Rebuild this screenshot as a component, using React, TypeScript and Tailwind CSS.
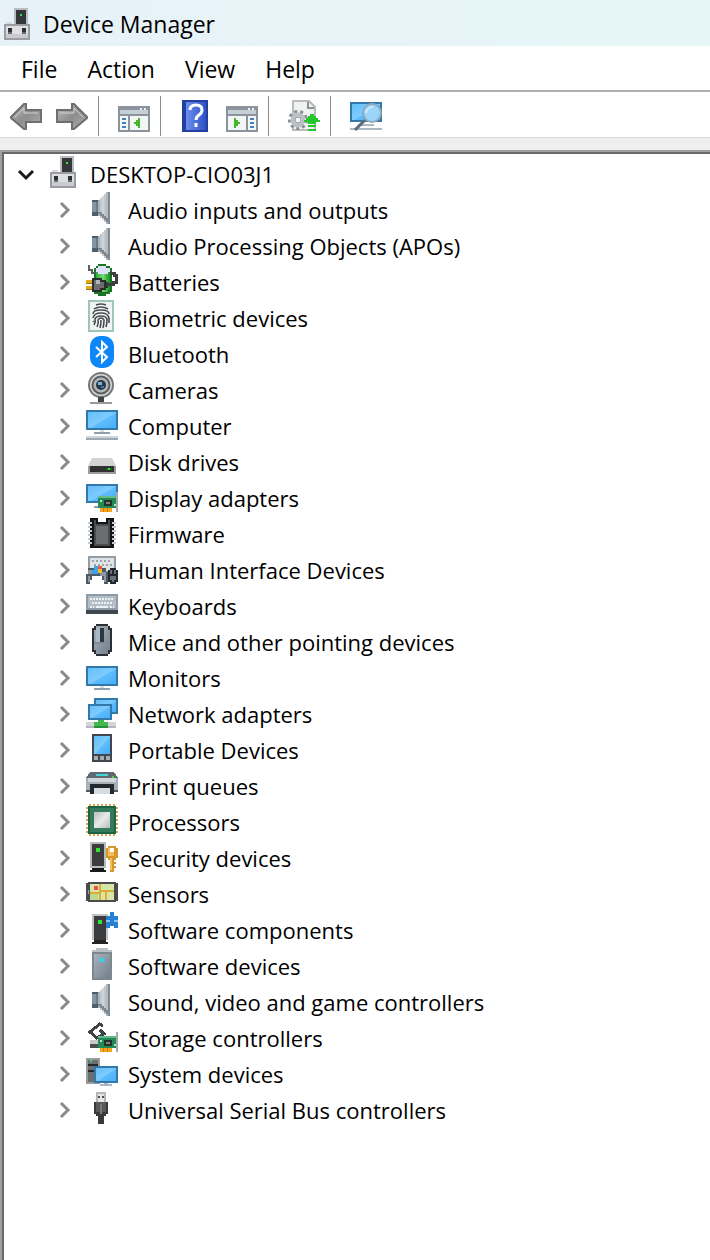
import { useState } from 'react';
import type { FC, ReactNode } from 'react';

const Svg: FC<{ children: ReactNode }> = ({ children }) => (
  <svg viewBox="0 0 32 32" className="h-8 w-8 shrink-0" shapeRendering="crispEdges" aria-hidden="true">
    {children}
  </svg>
);

// Shared gradients, referenced by every icon below
const Gradients: FC = () => (
  <svg className="absolute h-0 w-0" aria-hidden="true">
    <defs>
      <linearGradient id="screen" x1="0" y1="0" x2="1" y2="1">
        <stop offset="0" stopColor="#62bdfa" />
        <stop offset="0.5" stopColor="#7dccff" />
        <stop offset="0.55" stopColor="#5dbcfc" />
        <stop offset="1" stopColor="#46acf8" />
      </linearGradient>
      <linearGradient id="metal" x1="0" y1="0" x2="1" y2="0">
        <stop offset="0" stopColor="#a2abb3" />
        <stop offset="0.4" stopColor="#d3d8dc" />
        <stop offset="1" stopColor="#97a1a9" />
      </linearGradient>
      <linearGradient id="arrow" x1="0" y1="0" x2="1" y2="1">
        <stop offset="0" stopColor="#c4c4c4" />
        <stop offset="0.5" stopColor="#8d8d8d" />
        <stop offset="1" stopColor="#b0b0b0" />
      </linearGradient>
      <linearGradient id="help" x1="0" y1="0" x2="1" y2="0">
        <stop offset="0" stopColor="#6d8fec" />
        <stop offset="1" stopColor="#2d52c8" />
      </linearGradient>
      <linearGradient id="slate" x1="0" y1="0" x2="1" y2="1">
        <stop offset="0" stopColor="#a9b3bd" />
        <stop offset="1" stopColor="#727e8a" />
      </linearGradient>
      <linearGradient id="green" x1="0" y1="0" x2="1" y2="0">
        <stop offset="0" stopColor="#2fa837" />
        <stop offset="0.5" stopColor="#6fe070" />
        <stop offset="1" stopColor="#178a22" />
      </linearGradient>
      <linearGradient id="chip" x1="0" y1="0" x2="1" y2="1">
        <stop offset="0" stopColor="#b9bcbc" />
        <stop offset="0.5" stopColor="#e8e8e8" />
        <stop offset="1" stopColor="#b9bcbc" />
      </linearGradient>
    </defs>
  </svg>
);

const ComputerRoot: FC = () => (
  <Svg>
    <path d="M12 0h14v16H12z" fill="#b9bcc0" />
    <path d="M14 2h10v14H14z" fill="#34373a" />
    <path d="M18 6h2v2h-2z" fill="#35e03c" />
    <path d="M2 16h26v16H2z" fill="#9a9ca0" />
    <path d="M4 18h22v12H4z" fill="#dedfe3" />
    <path d="M4 26h22v4H4z" fill="#c9cbd0" />
    <path d="M4 14h6v2H4z" fill="#d5d7da" />
    <path d="M6 20h4v6H6zM20 20h4v6h-4z" fill="#2e3033" />
    <path d="M6 24h4v2H6zM20 24h4v2h-4z" fill="#66696d" />
  </Svg>
);

const Speaker: FC = () => (
  <Svg>
    <path d="M12 8h2V6h2V4h2V2h2V0h4v32h-4v-2h-2v-2h-2v-2h-2v-2h-2z" fill="url(#metal)" />
    <path d="M6 8h6v16H6z" fill="#4f5d69" />
    <path d="M6 10h4v10H6z" fill="#8495a4" />
    <path d="M10 10h2v10h-2z" fill="#6b7a87" />
    <path d="M20 4h2v24h-2z" fill="#b3bbc2" />
    <path d="M22 0h2v32h-2z" fill="#7f8b95" />
    <path d="M12 22h2v2h2v2h2v2h2v2h2v-4h-2v-2h-2v-2h-2v-2h-4z" fill="#7d8891" />
  </Svg>
);

const Battery: FC = () => (
  <Svg>
    <path d="M8 4h2V2h2V0h8v2h4v2h2v24h-2v2h-4v2h-8v-2H8z" fill="#1b7326" />
    <path d="M12 2h8v2h4v4h-2v2H12V8h-2V4h2z" fill="#dfe0fa" />
    <path d="M10 8h2v2h10V8h2v18h-2v2h-8v-2h-4z" fill="url(#green)" />
    <path d="M3 1v5h3v3h3" fill="none" stroke="#5b5f5d" strokeWidth="2" />
    <path d="M0 17h7M0 23h7" stroke="#e2a91b" strokeWidth="3" />
    <path d="M0 19h7M0 25h7" stroke="#9c7412" strokeWidth="1" />
    <path d="M6 14h10v2h4v2h2v6h-2v2h-4v2H6z" fill="#2b2d2e" />
    <path d="M8 16h6v2h4v6h-4v2H8z" fill="#6c6e6f" />
    <path d="M10 16h4v4h-4z" fill="#b4b5b5" />
    <path d="M21 20h6v-2h3v-7h-2V9h-4" fill="none" stroke="#3c3f40" strokeWidth="3" />
  </Svg>
);

const Fingerprint: FC = () => (
  <Svg>
    <path d="M3 1h24v30H3z" fill="#f1f4f4" stroke="#9ec4bc" strokeWidth="2" />
    <g fill="none" stroke="#4b4e50" strokeWidth="1.6" shapeRendering="auto">
      <path d="M10 5q5-2 10 0M8 9q7-4 14 0M7 14q0-4 8-4t8 4" />
      <path d="M7 18q1-5 8-5t8 5v5M8 25q2-3 1-6 1-3 6-3t6 3q0 5-1 8" />
      <path d="M11 27q2-4 1-7 1-2 3-2t3 2q0 4-1 8M15 20q0 5-1 8M7 21l1 1" />
    </g>
  </Svg>
);

const Bluetooth: FC = () => (
  <Svg>
    <rect x="4" y="0" width="24" height="32" rx="10" fill="#0c86f8" shapeRendering="auto" />
    <path
      d="M10 11l11 10-5 5V6l5 5-11 10"
      fill="none"
      stroke="#fff"
      strokeWidth="2"
      shapeRendering="auto"
    />
  </Svg>
);

const Camera: FC = () => (
  <Svg>
    <g shapeRendering="auto">
      <circle cx="15" cy="13" r="12" fill="#d6d7d7" stroke="#747677" strokeWidth="2" />
      <circle cx="15" cy="13" r="8.5" fill="#b3b5b6" stroke="#5b5e60" strokeWidth="2" />
      <circle cx="15" cy="13" r="5" fill="#27384a" />
      <path d="M12 10h4v3h-4z" fill="#7eb1da" />
      <path d="M15 14h3v2h-3z" fill="#3e78b2" />
    </g>
    <path d="M12 25h6v5h-6z" fill="#424446" />
    <path d="M4 30h22v2H4z" fill="#989a9b" />
  </Svg>
);

const Computer: FC = () => (
  <Svg>
    <path d="M1 3h30v18H1z" fill="url(#screen)" stroke="#3278a8" strokeWidth="2" />
    <path d="M14 22h4v2h-4z" fill="#d6dce1" />
    <path d="M8 24h16v2H8z" fill="#8fa0ae" />
    <path d="M0 28h32v2H0z" fill="#cdd5db" />
    <path d="M0 30h32v2H0z" fill="#9daab6" />
  </Svg>
);

const Disk: FC = () => (
  <Svg>
    <path d="M6 14h20l4 8H2z" fill="#d3d4d5" />
    <path d="M2 22h28v8H2z" fill="#9b9d9f" />
    <path d="M4 22h24v6H4z" fill="#2f3133" />
    <path d="M22 24h2v2h-2z" fill="#38e63d" />
    <path d="M20 24h2v2h-2zM24 24h2v2h-2z" fill="#176f1d" />
  </Svg>
);

const Card: FC = () => (
  <>
    <path d="M12 16h18v12H12z" fill="#218a55" />
    <path d="M12 16h18v2H12z" fill="#66b98b" />
    <path d="M18 20h8v6h-8z" fill="#25332d" />
    <path d="M20 22h4v2h-4z" fill="#77857e" />
    <path d="M14 20h2v2h-2zM28 24h2v2h-2z" fill="#b9ddca" />
    <path d="M14 28h12v4H14z" fill="#f4a51c" />
    <path d="M17 28h1v4h-1zM21 28h1v4h-1z" fill="#d17d08" />
    <path d="M30 12h2v20h-2z" fill="#a5aaac" />
  </>
);

const Display: FC = () => (
  <Svg>
    <path d="M1 5h30v17H1z" fill="url(#screen)" stroke="#3278a8" strokeWidth="2" />
    <path d="M8 26h6v2H8z" fill="#8fa0ae" />
    <Card />
  </Svg>
);

const Firmware: FC = () => (
  <Svg>
    <path d="M4 2h8v4h8V2h8v30H4z" fill="#141516" />
    <path d="M8 4h2v4h12V4h2v26H8z" fill="#4a4c4e" />
    <path d="M10 10h12v18H10z" fill="#6b6d6f" />
    <path d="M4 6v24M28 6v24" stroke="#c3cad2" strokeWidth="4" strokeDasharray="2 2" />
  </Svg>
);

const Hid: FC = () => (
  <Svg>
    <path d="M3 5h26v15H3z" fill="#dfe4e7" stroke="#929da6" strokeWidth="2" />
    <path d="M6 9h20M8 13h18" stroke="#9aa4ac" strokeWidth="2" strokeDasharray="2 2" />
    <path d="M2 16h18v4h2v12h-4v-4h-2v-4H6v4H4v4H0V22h2z" fill="#4f5963" />
    <path d="M2 18h6v4H2zM2 24h2v6H2zM14 20h6v4h-6zM18 24h2v6h-2z" fill="#8b99a7" />
    <path d="M8 14h4v4H8zM6 18h6v4H6z" fill="#39a3ee" />
    <path d="M12 14h4v3h-4z" fill="#ee5b43" />
    <path d="M12 17h4v4h-4z" fill="#f6bd28" />
    <path d="M24 16h6v2h2v12h-2v2h-6v-2h-2V18h2z" fill="#23282d" />
    <path d="M24 18h2v4h-2zM28 18h2v4h-2zM24 24h6v4h-2v2h-2v-2h-2z" fill="#65717d" />
  </Svg>
);

const Keyboard: FC = () => (
  <Svg>
    <path d="M0 6h32v16H0z" fill="#8f9ba6" />
    <path d="M2 8h28v12H2z" fill="#b3bdc6" />
    <path d="M4 11h24M6 15h20M4 19h4M24 19h4" stroke="#edf1f4" strokeWidth="2" strokeDasharray="2 1" />
    <path d="M10 18h12v2H10z" fill="#edf1f4" />
    <path d="M0 22h32v4H0z" fill="#3f4851" />
  </Svg>
);

const Mouse: FC = () => (
  <Svg>
    <path d="M10 0h12v2h2v2h2v24h-2v2h-2v2H10v-2H8v-2H6V4h2V2h2z" fill="#2b3036" />
    <path d="M10 2h12v4h2v20h-2v4H10v-4H8V6h2z" fill="url(#slate)" />
    <path d="M10 4h4v14h-4z" fill="#aab9ca" />
    <path d="M14 4h4v14h-4z" fill="#30353b" />
    <path d="M8 18h16v2H8z" fill="#7b8b9b" />
  </Svg>
);

const Monitor: FC = () => (
  <Svg>
    <path d="M1 7h30v18H1z" fill="url(#screen)" stroke="#3278a8" strokeWidth="2" />
    <path d="M14 26h4v2h-4z" fill="#d6dce1" />
    <path d="M8 28h16v2H8z" fill="#8fa0ae" />
  </Svg>
);

const Network: FC = () => (
  <Svg>
    <path d="M9 3h22v14H9z" fill="url(#screen)" stroke="#3278a8" strokeWidth="2" />
    <path d="M3 9h22v14H3z" fill="url(#screen)" stroke="#3278a8" strokeWidth="2" />
    <path d="M0 26h30v6H0z" fill="#d3d5d6" />
    <path d="M0 30h30v2H0z" fill="#b4b7b9" />
    <path d="M12 24h6v2h4v6H8v-6h4z" fill="#42b94e" />
    <path d="M8 30h14v2H8z" fill="#26913a" />
  </Svg>
);

const Portable: FC = () => (
  <Svg>
    <path d="M6 2h20v28H6z" fill="#41474d" />
    <path d="M8 4h16v18H8z" fill="url(#screen)" />
    <path d="M8 24h4v4H8zM14 24h4v4h-4zM20 24h4v4h-4z" fill="#a5abb0" />
  </Svg>
);

const Printer: FC = () => (
  <Svg>
    <path d="M4 4h24l4 6H0z" fill="#606970" />
    <path d="M10 6h12v2H10z" fill="#46d7d3" />
    <path d="M0 10h32v12H0z" fill="#a8b0b7" />
    <path d="M2 10h28v4H2z" fill="#d1d6da" />
    <path d="M26 8h2v2h-2z" fill="#39de43" />
    <path d="M4 16h24v10H4z" fill="#24292d" />
    <path d="M8 20h16v6H8z" fill="#d5dce2" />
    <path d="M0 22h4v2H0zM28 22h4v2h-4z" fill="#525a61" />
  </Svg>
);

const Processor: FC = () => (
  <Svg>
    <path d="M3 1h28M3 31h28M1 3v28M31 3v28" stroke="#d3a850" strokeWidth="2" strokeDasharray="2 2" />
    <path d="M2 2h28v28H2z" fill="#1e6245" />
    <path d="M4 4h24v24H4z" fill="#347b5c" />
    <path d="M8 8h16v16H8z" fill="url(#chip)" />
  </Svg>
);

const Security: FC = () => (
  <Svg>
    <path d="M4 2h16v26H4z" fill="#b6babd" />
    <path d="M6 4h12v22H6z" fill="#3a3c3e" />
    <path d="M10 8h4v4h-4z" fill="#2fe638" />
    <path d="M6 28h12v2H6zM4 30h16v2H4z" fill="#18191a" />
    <path d="M22 6h8v2h2v10h-2v2h-2v2h2v2h-2v2h2v2h-2v4h-4V20h-2v-2h-2V8h2z" fill="#d9962d" />
    <path d="M22 8h6v8h-6zM24 18h2v12h-2z" fill="#f5bd5c" />
    <path d="M24 8h4v4h-4z" fill="#fff" />
  </Svg>
);

const Sensor: FC = () => (
  <Svg>
    <path d="M2 6h28v1h2v18h-2v1H2v-1H0V7h2z" fill="#494b4d" />
    <path d="M4 8h24v16H4z" fill="#d5e6a5" />
    <path d="M4 17h10M14 8v16M14 15h14M20 16v8" stroke="#dfaa36" strokeWidth="2" />
    <path d="M8 10h4v4H8z" fill="#ed4c5c" />
    <path d="M4 18h8v6H4z" fill="#b8da91" />
    <path d="M2 14h1v4H2z" fill="#a4a6a8" />
  </Svg>
);

const SoftwareComponent: FC = () => (
  <Svg>
    <path d="M6 2h16v26H6z" fill="#c0c3c5" />
    <path d="M8 4h12v24H8z" fill="#3a3c3e" />
    <path d="M12 8h4v4h-4z" fill="#2fe638" />
    <path d="M8 28h12v2H8zM6 30h16v2H6z" fill="#222426" />
    <path d="M20 4h4V0h4v4h4v12h-4v-2h-4v2h-4z" fill="#2680d3" />
    <path d="M20 8h4v2h-4zM28 8h4v2h-4z" fill="#8cc4f2" />
  </Svg>
);

const SoftwareDevice: FC = () => (
  <Svg>
    <path d="M10 0h12v2h4v4H6V2h4z" fill="#bbc0c4" />
    <path d="M6 4h20v28H6z" fill="#7d8790" />
    <path d="M8 6h16v24H8z" fill="url(#slate)" />
    <path d="M14 10h4v4h-4z" fill="#2fd4ef" />
  </Svg>
);

const Storage: FC = () => (
  <Svg>
    <path d="M4 20h8v6H4z" fill="#c6c8c9" />
    <path d="M4 24h8v4H4z" fill="#4b4e50" />
    <path
      d="M17 6l-3-2-10 8 7 6 7-4-4-4"
      fill="none"
      stroke="#404244"
      strokeWidth="3"
    />
    <Card />
  </Svg>
);

const SystemDevice: FC = () => (
  <Svg>
    <path d="M0 2h14v26H0z" fill="#999c9f" />
    <path d="M2 4h10v22H2z" fill="#6c6f72" />
    <path d="M4 4h2v2H4z" fill="#3be344" />
    <path d="M2 8h10v2H2zM2 14h6v2H2z" fill="#25282a" />
    <path d="M9 11h22v15H9z" fill="url(#screen)" stroke="#3278a8" strokeWidth="2" />
    <path d="M18 27h4v1h-4zM14 28h12v2H14z" fill="#a5b6c5" />
  </Svg>
);

const Usb: FC = () => (
  <Svg>
    <path d="M10 0h10v10H10z" fill="#b4b6b7" />
    <path d="M12 2h6v8h-6z" fill="#e4e5e5" />
    <path d="M12 4h2v2h-2zM16 4h2v2h-2z" fill="#4c4e4f" />
    <path d="M8 10h14v12h-2v2h-2v8h-6v-8h-2v-2H8z" fill="#38393a" />
    <path d="M10 10h10v10H10z" fill="#58595a" />
    <path d="M14 12h2v10h-2z" fill="#77797a" />
  </Svg>
);

const Back: FC = () => (
  <Svg>
    <path
      d="M1 17L14 4h2v6h15v12H16v7h-2L1 18z"
      fill="url(#arrow)"
      stroke="#6f6f6f"
      strokeWidth="2"
      shapeRendering="auto"
    />
    <path d="M5 17l9-9v5h14" fill="none" stroke="#d0d0d0" strokeWidth="1" shapeRendering="auto" />
  </Svg>
);

const Forward: FC = () => (
  <Svg>
    <path
      d="M31 17L18 4h-2v6H1v12h15v7h2l13-11z"
      fill="url(#arrow)"
      stroke="#6f6f6f"
      strokeWidth="2"
      shapeRendering="auto"
    />
    <path d="M4 13h14V8l9 9" fill="none" stroke="#d0d0d0" strokeWidth="1" shapeRendering="auto" />
  </Svg>
);

const ConsoleTree: FC = () => (
  <Svg>
    <path d="M1 7h30v24H1z" fill="#f4f5f5" stroke="#8b949d" strokeWidth="2" />
    <path d="M2 8h28v2H2z" fill="#8b949d" />
    <path d="M2 10h28v4H2z" fill="#c7cfd6" />
    <path d="M22 8h2v2h-2zM26 8h2v2h-2z" fill="#eef1f3" />
    <path d="M2 14h28v2H2zM10 16h2v14h-2z" fill="#8b949d" />
    <path d="M4 18h4v2H4zM4 22h4v2H4zM4 26h4v2H4z" fill="#4083c7" />
    <path d="M22 18v10h-2v-2h-2v-2h-2v-2h2v-2h2v-2z" fill="#43b629" />
  </Svg>
);

const ActionPane: FC = () => (
  <Svg>
    <path d="M1 7h30v24H1z" fill="#f4f5f5" stroke="#8b949d" strokeWidth="2" />
    <path d="M2 8h28v2H2z" fill="#8b949d" />
    <path d="M2 10h28v4H2z" fill="#c7cfd6" />
    <path d="M22 8h2v2h-2zM26 8h2v2h-2z" fill="#eef1f3" />
    <path d="M2 14h28v2H2zM20 16h2v14h-2z" fill="#8b949d" />
    <path d="M24 18h4v2h-4zM24 22h4v2h-4zM24 26h4v2h-4z" fill="#4083c7" />
    <path d="M8 18v10h2v-2h2v-2h2v-2h-2v-2h-2v-2z" fill="#43b629" />
  </Svg>
);

const HelpBook: FC = () => (
  <Svg>
    <path d="M2 0h26v32H2z" fill="#23409f" />
    <path d="M6 2h20v28H6z" fill="url(#help)" />
    <path
      d="M10 10q0-5 6-5t6 5q0 3-3 5t-3 5M16 23v4"
      fill="none"
      stroke="#fff"
      strokeWidth="3"
      shapeRendering="auto"
    />
  </Svg>
);

const ScanHardware: FC = () => (
  <Svg>
    <path d="M5 1h16l6 6v23H5z" fill="#f0f1f1" stroke="#babcbd" strokeWidth="2" />
    <path d="M20 2v6h6" fill="none" stroke="#8e9192" strokeWidth="2" />
    <g shapeRendering="auto" fill="none">
      <circle cx="10" cy="20" r="8.5" stroke="#858f98" strokeWidth="3" strokeDasharray="3 3" />
      <circle cx="10" cy="20" r="5.5" stroke="#b9c1c7" strokeWidth="4" />
      <circle cx="10" cy="20" r="3" fill="#f4f5f6" stroke="#8d969e" />
    </g>
    <path d="M24 14h2v2h2v2h2v2h2v2h-4v2h-8v-2h-4v-2h2v-2h2v-2h2v-2h2z" fill="#25c52d" />
    <path d="M20 25h8v2h-8zM20 29h8v2h-8z" fill="#25c52d" />
  </Svg>
);

const DeviceSearch: FC = () => (
  <Svg>
    <path d="M1 3h30v18H1z" fill="url(#screen)" stroke="#3278a8" strokeWidth="2" />
    <path d="M8 24h16v2H8zM0 28h32v2H0z" fill="#aab8c4" />
    <g shapeRendering="auto">
      <path d="M15 20L5 30" stroke="#5b6b78" strokeWidth="3" />
      <circle cx="22" cy="13" r="9" fill="#9cd5fa" stroke="#91a8b8" strokeWidth="2" />
      <path d="M16 13q1-6 7-6" fill="none" stroke="#c8e9ff" strokeWidth="2" />
    </g>
  </Svg>
);

const menus = ['File', 'Action', 'View', 'Help'];

const categories: { name: string; icon: FC }[] = [
  { name: 'Audio inputs and outputs', icon: Speaker },
  { name: 'Audio Processing Objects (APOs)', icon: Speaker },
  { name: 'Batteries', icon: Battery },
  { name: 'Biometric devices', icon: Fingerprint },
  { name: 'Bluetooth', icon: Bluetooth },
  { name: 'Cameras', icon: Camera },
  { name: 'Computer', icon: Computer },
  { name: 'Disk drives', icon: Disk },
  { name: 'Display adapters', icon: Display },
  { name: 'Firmware', icon: Firmware },
  { name: 'Human Interface Devices', icon: Hid },
  { name: 'Keyboards', icon: Keyboard },
  { name: 'Mice and other pointing devices', icon: Mouse },
  { name: 'Monitors', icon: Monitor },
  { name: 'Network adapters', icon: Network },
  { name: 'Portable Devices', icon: Portable },
  { name: 'Print queues', icon: Printer },
  { name: 'Processors', icon: Processor },
  { name: 'Security devices', icon: Security },
  { name: 'Sensors', icon: Sensor },
  { name: 'Software components', icon: SoftwareComponent },
  { name: 'Software devices', icon: SoftwareDevice },
  { name: 'Sound, video and game controllers', icon: Speaker },
  { name: 'Storage controllers', icon: Storage },
  { name: 'System devices', icon: SystemDevice },
  { name: 'Universal Serial Bus controllers', icon: Usb },
];

const ToolButton: FC<{ label: string; icon: FC }> = ({ label, icon: Icon }) => (
  <button type="button" aria-label={label} className="flex w-[46px] shrink-0 justify-center pt-2">
    <Icon />
  </button>
);

const Separator: FC = () => <div className="mt-1 mr-3 ml-[3px] h-10 w-px shrink-0 bg-[#8c8c8c]" />;

const Chevron: FC<{ open?: boolean }> = ({ open }) => (
  <svg viewBox="0 0 20 20" className="h-5 w-5" fill="none" strokeWidth="3" aria-hidden="true">
    {open ? <path d="M3 7l7 7 7-7" stroke="#1b1b1b" /> : <path d="M7 3l7 7-7 7" stroke="#8a8a8a" />}
  </svg>
);

const App: FC = () => {
  const [open, setOpen] = useState(true);

  return (
    <div className="flex min-h-screen flex-col bg-white font-['Open_Sans','Noto_Sans',sans-serif] text-[23px] leading-9 text-black">
      <Gradients />
      <header className="flex h-[46px] items-center gap-[9px] bg-linear-to-r from-[#e7f2f8] to-[#e6f6f6] pt-px pl-[2px]">
        <ComputerRoot />
        <h1>Device Manager</h1>
      </header>

      <nav className="flex h-[46px] items-center gap-[30px] border-b-2 border-[#b0b0b0] pt-[2px] pl-[21px]">
        {menus.map((menu) => (
          <button key={menu} type="button">
            {menu}
          </button>
        ))}
      </nav>

      <div role="toolbar" className="flex h-[46px] border-b border-[#d9d9d9] pl-[3px]">
        <ToolButton label="Back" icon={Back} />
        <ToolButton label="Forward" icon={Forward} />
        <Separator />
        <ToolButton label="Show/Hide Console Tree" icon={ConsoleTree} />
        <Separator />
        <ToolButton label="Help" icon={HelpBook} />
        <ToolButton label="Show/Hide Action Pane" icon={ActionPane} />
        <Separator />
        <ToolButton label="Scan for hardware changes" icon={ScanHardware} />
        <Separator />
        <ToolButton label="Devices and Printers" icon={DeviceSearch} />
      </div>

      <div className="h-3 bg-[#efefef]" />

      <main className="flex grow flex-col border-t-2 border-l-2 border-[#a0a0a0]">
        <div className="grow border-t-2 border-l-2 border-[#696969] pt-[2px] text-[22px]">
          <div className="flex h-9 pl-3">
            <button type="button" aria-label="Toggle computer" onClick={() => setOpen(!open)} className="w-8">
              <Chevron open={open} />
            </button>
            <ComputerRoot />
            <span className="pl-[10px]">DESKTOP-CIO03J1</span>
          </div>
          {open && (
            <ul>
              {categories.map(({ name, icon: Icon }) => (
                <li key={name} className="flex h-9 pl-[50px]">
                  <button type="button" aria-label={`Expand ${name}`} className="w-8">
                    <Chevron />
                  </button>
                  <Icon />
                  <span className="pl-[10px] whitespace-nowrap">{name}</span>
                </li>
              ))}
            </ul>
          )}
        </div>
      </main>
    </div>
  );
};

export default App;
